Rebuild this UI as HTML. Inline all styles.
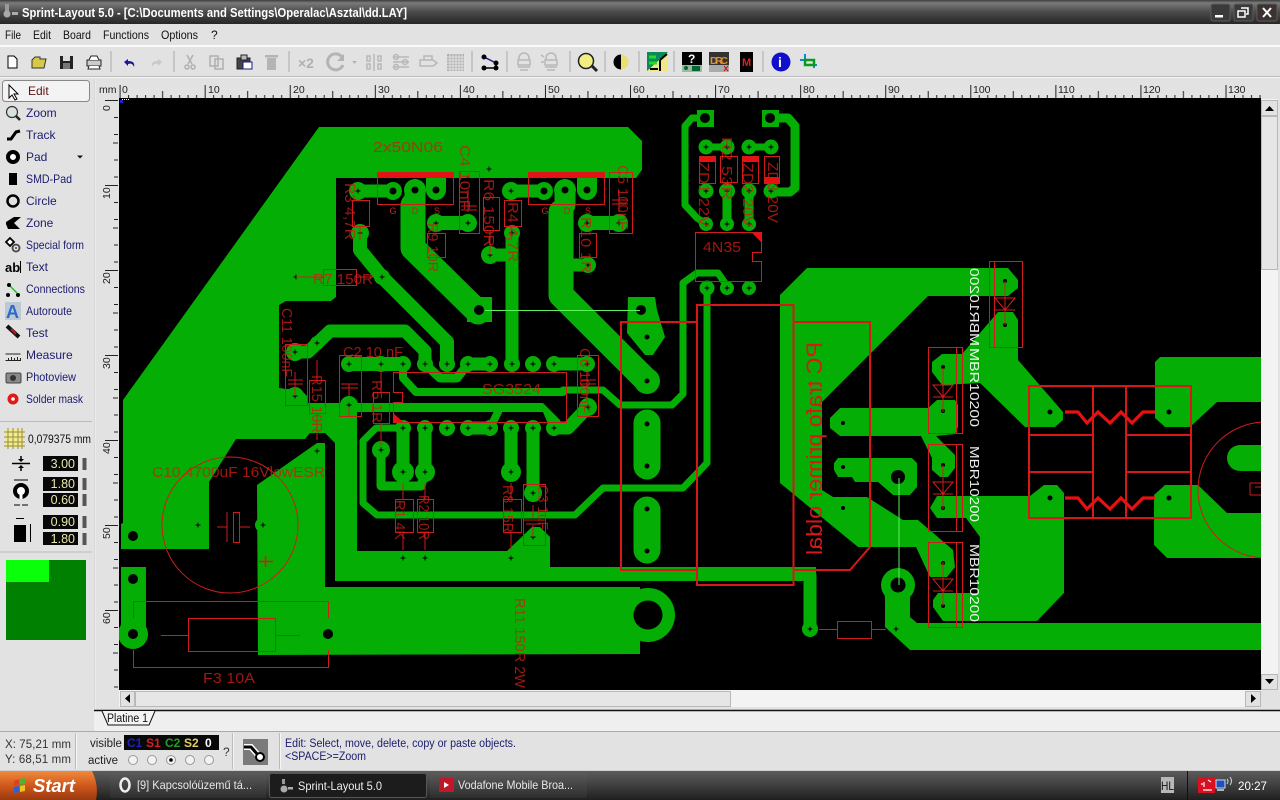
<!DOCTYPE html>
<html><head><meta charset="utf-8"><title>Sprint-Layout 5.0</title>
<style>
html,body{margin:0;padding:0;background:#e2e2e2;width:1280px;height:800px;overflow:hidden}
svg{display:block}
text{font-family:"Liberation Sans","DejaVu Sans",sans-serif}
.nav{fill:#1c1c6e;font-size:12px}
.m{fill:#111;font-size:12px}
.r{fill:#cc1e14;font-size:15px;fill-opacity:.78}
.w{fill:#fff;font-size:13px;fill-opacity:.92}
.rl{fill:#222;font-size:10.5px}
.f{fill:#e8e8a8;font-size:12.5px;text-anchor:end}
</style></head><body>
<svg width="1280" height="800" viewBox="0 0 1280 800" xmlns="http://www.w3.org/2000/svg">
<defs>
<linearGradient id="tb" x1="0" y1="0" x2="0" y2="1"><stop offset="0" stop-color="#3c3c3c"/><stop offset=".12" stop-color="#7a7a7a"/><stop offset=".5" stop-color="#4a4a4a"/><stop offset="1" stop-color="#262626"/></linearGradient>
<linearGradient id="tk" x1="0" y1="0" x2="0" y2="1"><stop offset="0" stop-color="#5e5e5e"/><stop offset=".5" stop-color="#404040"/><stop offset="1" stop-color="#1f1f1f"/></linearGradient>
<linearGradient id="st" x1="0" y1="0" x2="0" y2="1"><stop offset="0" stop-color="#f08a3c"/><stop offset=".5" stop-color="#d0581c"/><stop offset="1" stop-color="#9a3a10"/></linearGradient>
<linearGradient id="btn" x1="0" y1="0" x2="0" y2="1"><stop offset="0" stop-color="#5a5a5a"/><stop offset="1" stop-color="#2e2e2e"/></linearGradient>
<clipPath id="cv"><rect x="119" y="99" width="1142" height="591"/></clipPath>
<pattern id="hr" x="119.6" y="85" width="85.07" height="13" patternUnits="userSpaceOnUse">
<path d="M.5 0V13M43 6V13M9 10V13M17.5 10V13M26 10V13M34.5 10V13M51.5 10V13M60 10V13M68.5 10V13M77 10V13" stroke="#222" fill="none"/></pattern>
<pattern id="vr" x="105" y="100" width="13" height="85" patternUnits="userSpaceOnUse">
<path d="M0 .5H13M8 43H13M9 17.5H13M9 34.5H13M9 60H13M9 77H13" stroke="#222" fill="none"/></pattern>
<g id="t"><path d="M-2.5 0H2.5M0 -2.5V2.5" stroke="#000" stroke-width=".9" fill="none"/><circle r="1" fill="#000"/></g>
<g id="dio"><path d="M-10 0H10L0 12ZM-10 12H10M0 -17V27" stroke="#d81c1c" fill="none"/></g>
</defs>

<rect width="1280" height="800" fill="#e2e2e2"/>

<!-- title bar -->
<rect width="1280" height="24" fill="url(#tb)"/>
<rect x="5" y="4" width="4" height="8" fill="#999"/><circle cx="7" cy="14" r="3.5" fill="#aaa"/><rect x="12" y="12" width="6" height="3" fill="#aaa"/>
<text x="22" y="17" fill="#fff" font-size="12.5" font-weight="bold" textLength="385" lengthAdjust="spacingAndGlyphs">Sprint-Layout 5.0 - [C:\Documents and Settings\Operalac\Asztal\dd.LAY]</text>
<rect x="1211" y="4" width="19" height="17" rx="2" fill="#3a3a3a" stroke="#5c5c5c"/><rect x="1215" y="15" width="8" height="2.5" fill="#fff"/>
<rect x="1234" y="4" width="19" height="17" rx="2" fill="#3a3a3a" stroke="#5c5c5c"/><path d="M1241 8h7v6h-2M1238 11h7v6h-7z" fill="none" stroke="#fff" stroke-width="1.5"/>
<rect x="1257" y="4" width="20" height="17" rx="2" fill="#3c3230" stroke="#5c5c5c"/><path d="M1263 8l8 9M1271 8l-8 9" stroke="#fff" stroke-width="2"/>

<!-- menu -->
<rect y="24" width="1280" height="22" fill="#e2e2e2"/>
<rect y="45" width="1280" height="2" fill="#fafafa"/>
<text class="m" x="5" y="39" textLength="16" lengthAdjust="spacingAndGlyphs">File</text>
<text class="m" x="33" y="39" textLength="18" lengthAdjust="spacingAndGlyphs">Edit</text>
<text class="m" x="63" y="39" textLength="28" lengthAdjust="spacingAndGlyphs">Board</text>
<text class="m" x="103" y="39" textLength="46" lengthAdjust="spacingAndGlyphs">Functions</text>
<text class="m" x="161" y="39" textLength="37" lengthAdjust="spacingAndGlyphs">Options</text>
<text class="m" x="211" y="39">?</text>

<!-- toolbar -->
<rect y="76" width="1280" height="1" fill="#bbb"/><rect y="77" width="1280" height="1" fill="#f6f6f6"/>
<path d="M111 51V72M174 51V72M289 51V72M472 51V72M507 51V72M570 51V72M605 51V72M639 51V72M674 51V72M763 51V72" stroke="#bdbdbd" stroke-width="1.5"/>
<path d="M8 56h6l3 3v9H8z" fill="#fff" stroke="#000"/>
<path d="M32 60l3-3h5v2h6l-2 9H32z" fill="#d8c848" stroke="#333"/>
<rect x="60" y="56" width="13" height="13" fill="#222"/><rect x="63" y="56" width="7" height="5" fill="#ddd"/><rect x="63" y="63" width="7" height="6" fill="#777"/>
<rect x="87" y="60" width="14" height="6" fill="#ccc" stroke="#222"/><path d="M89 60l2-4h6l2 4M89 66l-1 3h12l-1-3" fill="#fff" stroke="#222"/>
<path d="M124 62l4-3v2c5 0 7 2 6 6-1-3-3-4-6-3v2z" fill="#1a1a8a"/>
<path d="M162 62l-4-3v2c-5 0-7 2-6 6 1-3 3-4 6-3v2z" fill="#c8c8c8"/>
<g fill="none" stroke="#b0b0b0" stroke-width="1.5"><path d="M187 55l5 9M193 55l-5 9"/><circle cx="187" cy="67" r="2"/><circle cx="193" cy="67" r="2"/>
<rect x="210" y="56" width="8" height="10"/><rect x="215" y="59" width="8" height="10"/></g>
<rect x="237" y="58" width="13" height="11" fill="#444" stroke="#222"/><rect x="241" y="55" width="6" height="5" fill="#bbb" stroke="#222"/><rect x="243" y="62" width="9" height="7" fill="#fff" stroke="#1a1a8a"/>
<rect x="267" y="58" width="9" height="12" fill="#b4b4b4"/><rect x="265" y="55" width="13" height="2.5" fill="#b4b4b4"/>
<text x="298" y="68" fill="#b0b0b0" font-size="14" font-weight="bold">×2</text>
<path d="M342 57a8 8 0 1 0 1 8" fill="none" stroke="#b4b4b4" stroke-width="3"/><path d="M344 54v7h-7z" fill="#b4b4b4"/><path d="M352 61h5l-2.500 3z" fill="#b4b4b4"/>
<g fill="none" stroke="#b8b8b8" stroke-width="1.5"><path d="M374 54V71M367 56h3v5h-3zM378 56h3v5h-3zM367 64h3v5h-3zM378 64h3v5h-3z"/>
<path d="M393 57h16M393 62h16M393 67h16"/><circle cx="396" cy="57" r="2.500"/><circle cx="405" cy="62" r="2.500"/><circle cx="396" cy="67" r="2.500"/>
<path d="M420 60h13l4 3-4 3h-13zM424 56h8v4h-8z"/></g>
<rect x="447" y="54" width="17" height="17" fill="#b0b0b0"/><path d="M450 54v17M453 54v17M456 54v17M459 54v17M462 54v17M447 57h17M447 60h17M447 63h17M447 66h17M447 69h17" stroke="#e2e2e2"/>
<path d="M484 57l12 6" stroke="#1a1a8a" fill="none" stroke-width="1.500"/><path d="M484 68h12v-5" stroke="#000" fill="none" stroke-width="1.500"/>
<circle cx="484" cy="57" r="2.500" fill="#000"/><circle cx="496" cy="63" r="2.500" fill="#000"/><circle cx="484" cy="68" r="2.500" fill="#000"/><circle cx="496" cy="68" r="2.500" fill="#000"/>
<g fill="none" stroke="#b8b8b8" stroke-width="1.500"><path d="M519 60v-2a5 5 0 0 1 10 0v2M518 60h12v5h-12zM518 67h12M520 70h8"/>
<path d="M546 60v-2a5 5 0 0 1 10 0v2M545 60h12v5h-12zM545 67h12M547 70h8M541 55l3 2M541 62h3"/></g>
<circle cx="586" cy="61" r="7.500" fill="#f2ee80" stroke="#222" stroke-width="1.500"/><path d="M592 66l5 5" stroke="#222" stroke-width="3"/>
<circle cx="621" cy="62" r="7.500" fill="#e8e070"/><path d="M621 54.500a7.500 7.500 0 0 0 0 15zM621 60a2 2 0 0 0 0 4z" fill="#000"/>
<rect x="647" y="52" width="21" height="19" fill="#f0e888"/><path d="M647 52h21L647 71z" fill="#0a8a5a"/><path d="M649 57h7M649 63h8" stroke="#22dd22" stroke-width="3"/><path d="M660 60v11M660 60l7-6M650 69h8" stroke="#000" stroke-width="2"/>
<rect x="682" y="52" width="20" height="20" fill="#000"/><rect x="682" y="65" width="20" height="7" fill="#9aba9a"/><text x="688" y="63" fill="#fff" font-size="12" font-weight="bold">?</text><circle cx="686" cy="68" r="2" fill="#063"/><rect x="692" y="66" width="8" height="5" fill="#063"/>
<rect x="709" y="52" width="20" height="20" fill="#333"/><text x="710" y="64" fill="#e09030" font-size="10.500" font-weight="bold" textLength="18">DRC</text><rect x="709" y="65" width="20" height="7" fill="#aaa"/><path d="M724 66l4 5M728 66l-4 5" stroke="#c00"/>
<rect x="740" y="52" width="13" height="20" fill="#000"/><text x="742" y="66" fill="#e02020" font-size="11" font-weight="bold">M</text>
<circle cx="781" cy="62" r="9.500" fill="#1010cc"/><text x="778" y="67" fill="#fff" font-size="14" font-weight="bold">i</text>
<path d="M800 60h14v8M805 54v11h12" fill="none" stroke="#0a8ad0" stroke-width="2"/><path d="M805 60h9v5h-9z" fill="none" stroke="#0a9a20" stroke-width="2.500"/>

<!-- ruler -->
<rect x="94" y="78" width="1186" height="21" fill="#e2e2e2"/>
<rect x="95" y="78" width="24" height="612" fill="#e2e2e2"/>
<path d="M94 78V708" stroke="#bbb"/><path d="M95 78V708" stroke="#f4f4f4"/>
<rect x="119" y="85" width="1142" height="13" fill="url(#hr)"/>
<rect x="105" y="100" width="13" height="590" fill="url(#vr)"/>
<text x="99" y="93" class="rl" font-size="11">mm</text>
<text class="rl" x="122" y="93">0</text><text class="rl" x="208" y="93">10</text><text class="rl" x="293" y="93">20</text><text class="rl" x="378" y="93">30</text><text class="rl" x="463" y="93">40</text><text class="rl" x="548" y="93">50</text><text class="rl" x="633" y="93">60</text><text class="rl" x="718" y="93">70</text><text class="rl" x="803" y="93">80</text><text class="rl" x="888" y="93">90</text><text class="rl" x="973" y="93">100</text><text class="rl" x="1058" y="93">110</text><text class="rl" x="1143" y="93">120</text><text class="rl" x="1228" y="93">130</text>
<text class="rl" transform="translate(110,111) rotate(-90)">0</text>
<text class="rl" transform="translate(110,199) rotate(-90)">10</text>
<text class="rl" transform="translate(110,284) rotate(-90)">20</text>
<text class="rl" transform="translate(110,369) rotate(-90)">30</text>
<text class="rl" transform="translate(110,454) rotate(-90)">40</text>
<text class="rl" transform="translate(110,539) rotate(-90)">50</text>
<text class="rl" transform="translate(110,624) rotate(-90)">60</text>

<!-- PCB canvas -->
<rect x="119" y="98" width="1142" height="592" fill="#000"/>
<g clip-path="url(#cv)">
<g fill="#04ae04">
<polygon points="319,127 628,127 642,141 642,170 636,178 336,178 336,297 331,301 286,301 279,305 279,388 286,389 300,389 308,397 308,403 543,403 560,420 562,428 548,424 543,412 357,412 357,551 507,551 532,527 540,527 550,537 550,567 816,567 816,581 335,581 335,443 325,433 310,433 305,439 236,439 209,482 209,549 121,549 121,524 123,523 123,400"/>
<polygon points="257,485 317,443 325,443 325,587 640,587 640,654 258,655"/>
<circle cx="648" cy="615" r="27"/>
<circle cx="262" cy="525" r="7"/>
<polygon points="121,567 146,567 146,634 121,634"/><circle cx="133" cy="634" r="15"/>
<polygon points="628,297 655,297 657,310 665,337 653,355 645,355 627,333"/>
<polygon points="807,268 1008,268 1018,280 1018,288 1008,296 928,296 822,402 822,490 833,497 867,497 903,520 918,520 953,550 955,567 947,577 930,577 916,547 858,547 780,483 780,295"/>
<polygon points="840,408 928,408 937,400 955,400 958,405 958,427 955,434 936,436 955,455 955,468 948,477 940,477 932,470 932,458 921,436 840,436 830,428 830,418"/>
<polygon points="838,458 912,458 917,463 917,487 910,495 893,495 878,482 855,482 852,477 838,477 834,470 834,463"/>
<polygon points="937,496 1030,496 1044,485 1057,485 1064,493 1064,593 1037,621 943,621 933,607 933,600 938,593 977,593 980,537 966,518 937,518 930,508"/>
<polygon points="998,312 1013,312 1018,320 1018,360 1063,412 1063,420 1055,427 1025,427 980,383 942,385 932,372 932,362 942,354 962,354"/>
<polygon points="1160,357 1261,357 1261,402 1217,402 1190,427 1165,427 1155,418 1155,362"/>
<polygon points="1165,485 1198,485 1227,513 1261,513 1261,558 1167,558 1154,545 1154,495"/>
<polygon points="885,590 910,590 910,617 917,623 1261,623 1261,650 910,650 885,627"/>
<circle cx="898" cy="585" r="17"/>
<rect x="467" y="297" width="25" height="25"/>
<rect x="697" y="110" width="17" height="17"/><rect x="762" y="110" width="17" height="17"/>
</g>
<g fill="none" stroke="#04ae04" stroke-linecap="round" stroke-linejoin="round">
<path stroke-width="13" d="M358 191H393M511 191H544M490 255H512M575 265H588M512 233V364M295 352H308L330 331H405L425 351V364M468 364H490M554 364H587M403 428V472M425 428V472M468 428H490M511 428V472M533 428V493M553 428H568L588 407M810 575V629"/>
<path stroke-width="14" d="M438 223H468M587 223H619M360 233V250L382 277L447 342V364M349 364H403"/>
<path stroke-width="9" d="M425 364L440 378H457L468 364M381 450V486H421L425 472M770 118H788L795 126V188L790 192H771M727 191V224M749 191V224"/>
<path stroke-width="8" d="M403 364V378L416 392H563M490 428L498 412"/>
<path stroke-width="7" d="M563 390H603L620 405H672L683 394V283L697 273H718L727 286M400 428H376L363 441V503L377 515H575L603 488H683L707 463V288M700 118H692L685 126V205L697 218L706 224M706 147H727M749 147H771"/>
<path stroke-width="25" d="M413 205V248L478 312M561 212V295L647 381"/>
<path stroke-width="21" d="M415 190V205M565 190V205"/>
<path stroke-width="20" d="M436 178V190M587 178V190"/>
<path stroke-width="27" d="M647 423V466M647 510V550"/>
<path stroke-width="26" d="M1240 458H1270"/>
</g>
<g fill="#04ae04">
<circle cx="358" cy="191" r="9"/><circle cx="393" cy="191" r="9"/><circle cx="511" cy="191" r="9"/><circle cx="544" cy="191" r="9"/><circle cx="436" cy="223" r="9"/><circle cx="468" cy="223" r="9"/><circle cx="587" cy="223" r="9"/><circle cx="619" cy="223" r="9"/><circle cx="490" cy="255" r="9"/><circle cx="588" cy="265" r="8"/><circle cx="512" cy="233" r="8"/><circle cx="360" cy="233" r="9"/><circle cx="382" cy="277" r="8"/><circle cx="295" cy="352" r="9"/><circle cx="317" cy="343" r="7"/>
<circle cx="349" cy="364" r="8"/><circle cx="381" cy="364" r="8"/><circle cx="403" cy="364" r="8"/><circle cx="425" cy="364" r="8"/><circle cx="447" cy="364" r="8"/><circle cx="468" cy="364" r="8"/><circle cx="490" cy="364" r="8"/><circle cx="512" cy="364" r="8"/><circle cx="533" cy="364" r="8"/><circle cx="554" cy="364" r="8"/><circle cx="587" cy="364" r="8"/>
<circle cx="403" cy="428" r="8"/><circle cx="425" cy="428" r="8"/><circle cx="447" cy="428" r="8"/><circle cx="468" cy="428" r="8"/><circle cx="490" cy="428" r="8"/><circle cx="511" cy="428" r="8"/><circle cx="533" cy="428" r="8"/><circle cx="554" cy="428" r="8"/><circle cx="588" cy="407" r="9"/>
<circle cx="403" cy="472" r="11"/><circle cx="425" cy="472" r="10"/><circle cx="511" cy="472" r="10"/><circle cx="381" cy="450" r="9"/><circle cx="533" cy="493" r="9"/><circle cx="295" cy="396" r="9"/><circle cx="349" cy="405" r="9"/>
<circle cx="706" cy="147" r="7.500"/><circle cx="727" cy="147" r="7.500"/><circle cx="749" cy="147" r="7.500"/><circle cx="771" cy="147" r="7.500"/><circle cx="706" cy="191" r="7.500"/><circle cx="727" cy="191" r="8"/><circle cx="749" cy="191" r="7.500"/><circle cx="771" cy="191" r="7.500"/><circle cx="706" cy="224" r="7"/><circle cx="727" cy="224" r="7"/><circle cx="749" cy="224" r="7"/>
<circle cx="707" cy="288" r="7.500"/><circle cx="727" cy="288" r="7"/><circle cx="749" cy="288" r="7"/><circle cx="647" cy="381" r="13"/><circle cx="415" cy="190" r="11"/><circle cx="565" cy="190" r="11"/>
<circle cx="533" cy="537" r="6"/><circle cx="810" cy="629" r="8"/>
</g>
<!-- holes -->
<g fill="#000">
<circle cx="393" cy="191" r="3.500"/><circle cx="415" cy="190" r="3.500"/><circle cx="436" cy="190" r="3.500"/><circle cx="544" cy="191" r="3.500"/><circle cx="565" cy="190" r="3.500"/><circle cx="587" cy="190" r="3.500"/>
<circle cx="479" cy="310" r="5"/><circle cx="641" cy="310" r="5"/><circle cx="648" cy="615" r="14.500"/><circle cx="705" cy="118" r="5"/><circle cx="770" cy="118" r="5"/><circle cx="133" cy="536" r="5"/><circle cx="133" cy="579" r="5"/><circle cx="133" cy="634" r="5"/><circle cx="328" cy="634" r="5"/><circle cx="898" cy="477" r="7"/><circle cx="898" cy="585" r="7.500"/>
<circle cx="647" cy="381" r="2.500"/><circle cx="647" cy="337" r="2.500"/><circle cx="647" cy="424" r="2.500"/><circle cx="647" cy="466" r="2.500"/><circle cx="647" cy="509" r="2.500"/><circle cx="647" cy="551" r="2.500"/>
<circle cx="1050" cy="412" r="2.500"/><circle cx="1169" cy="412" r="2.500"/><circle cx="1050" cy="498" r="2.500"/><circle cx="1169" cy="498" r="2.500"/>
<circle cx="1005" cy="281" r="2"/><circle cx="1005" cy="325" r="2"/><circle cx="943" cy="367" r="2"/><circle cx="943" cy="411" r="2"/><circle cx="943" cy="465" r="2"/><circle cx="943" cy="508" r="2"/><circle cx="943" cy="563" r="2"/><circle cx="943" cy="606" r="2"/><circle cx="843" cy="423" r="2"/><circle cx="843" cy="467" r="2"/><circle cx="843" cy="508" r="2"/>
</g>
<g>
<use href="#t" x="358" y="191"/><use href="#t" x="511" y="191"/><use href="#t" x="436" y="223"/><use href="#t" x="468" y="223"/><use href="#t" x="587" y="223"/><use href="#t" x="619" y="223"/><use href="#t" x="490" y="255"/><use href="#t" x="588" y="265"/><use href="#t" x="512" y="233"/><use href="#t" x="360" y="233"/><use href="#t" x="382" y="277"/><use href="#t" x="295" y="352"/><use href="#t" x="317" y="343"/><use href="#t" x="349" y="364"/><use href="#t" x="381" y="364"/><use href="#t" x="403" y="364"/><use href="#t" x="425" y="364"/><use href="#t" x="447" y="364"/><use href="#t" x="468" y="364"/><use href="#t" x="490" y="364"/><use href="#t" x="512" y="364"/><use href="#t" x="533" y="364"/><use href="#t" x="554" y="364"/><use href="#t" x="587" y="364"/>
<use href="#t" x="403" y="428"/><use href="#t" x="425" y="428"/><use href="#t" x="447" y="428"/><use href="#t" x="468" y="428"/><use href="#t" x="490" y="428"/><use href="#t" x="511" y="428"/><use href="#t" x="533" y="428"/><use href="#t" x="554" y="428"/><use href="#t" x="588" y="407"/><use href="#t" x="403" y="472"/><use href="#t" x="425" y="472"/><use href="#t" x="511" y="472"/><use href="#t" x="381" y="450"/><use href="#t" x="533" y="493"/><use href="#t" x="295" y="396"/><use href="#t" x="349" y="405"/>
<use href="#t" x="706" y="147"/><use href="#t" x="727" y="147"/><use href="#t" x="749" y="147"/><use href="#t" x="771" y="147"/><use href="#t" x="706" y="191"/><use href="#t" x="727" y="191"/><use href="#t" x="749" y="191"/><use href="#t" x="771" y="191"/><use href="#t" x="706" y="224"/><use href="#t" x="727" y="224"/><use href="#t" x="749" y="224"/><use href="#t" x="707" y="288"/><use href="#t" x="727" y="288"/><use href="#t" x="749" y="288"/>
<use href="#t" x="468" y="179"/><use href="#t" x="489" y="169"/><use href="#t" x="619" y="179"/><use href="#t" x="296" y="277"/><use href="#t" x="198" y="525"/><use href="#t" x="263" y="525"/><use href="#t" x="317" y="451"/><use href="#t" x="403" y="558"/><use href="#t" x="425" y="558"/><use href="#t" x="511" y="558"/><use href="#t" x="533" y="537"/><use href="#t" x="810" y="629"/><use href="#t" x="896" y="629"/>
</g>
<!-- air wires -->
<path d="M485 310.500H640M899 478V585" stroke="#60f060" fill="none"/>
<rect x="120" y="100" width="3" height="3" fill="#2222cc"/><path d="M122 99.500H130" stroke="#fff" stroke-dasharray="1 1"/>

<!-- silkscreen -->
<g fill="#e81010">
<rect x="377" y="172" width="76" height="6"/><rect x="528" y="172" width="76" height="6"/>
<polygon points="393,413 403,422 393,422"/><polygon points="751,232 761,232 761,242"/>
<rect x="699" y="156" width="16" height="6"/><rect x="742" y="156" width="16" height="6"/><rect x="764" y="177" width="15" height="6"/>
</g>
<g fill="none" stroke="#d01c1c" stroke-width="1">
<rect x="377.500" y="172.500" width="76" height="32"/><rect x="528.500" y="172.500" width="76" height="32"/>
<rect x="459.500" y="171.500" width="20" height="62"/><rect x="609.500" y="172.500" width="23" height="61"/>
<rect x="483.500" y="197.500" width="16" height="33"/><rect x="504.500" y="200.500" width="17" height="26"/><rect x="427.500" y="233.500" width="18" height="24"/><rect x="579.500" y="233.500" width="17" height="24"/><rect x="352.500" y="200.500" width="17" height="26"/><rect x="323.500" y="269.500" width="33" height="16"/>
<rect x="285.500" y="344.500" width="22" height="61"/><rect x="339.500" y="355.500" width="22" height="61"/><rect x="309.500" y="380.500" width="16" height="33"/><rect x="373.500" y="392.500" width="16" height="31"/><rect x="577.500" y="355.500" width="21" height="61"/>
<path d="M393.500 372.500H566.500V422.500H393.500V402.500H402.500V392.500H393.500Z"/>
<rect x="395.500" y="499.500" width="18" height="33"/><rect x="417.500" y="499.500" width="16" height="33"/><rect x="503.500" y="499.500" width="18" height="33"/><rect x="523.500" y="484.500" width="22" height="61"/>
<path d="M133.500 618V601.500H328.500V618M133.500 650V667.500H328.500V650"/><rect x="188.500" y="618.500" width="87" height="33"/><path d="M161 635.500H188M275 635.500H300"/>
<circle cx="230" cy="525" r="68"/><path d="M217 527H227M227 512V542M239 527H250"/><rect x="233.500" y="512.500" width="6" height="30"/>
<path d="M695.500 232.500H761.500V252.500H752.500V261.500H761.500V281.500H695.500Z"/>
<rect x="699.500" y="156.500" width="16" height="27"/><rect x="720.500" y="156.500" width="17" height="26"/><rect x="742.500" y="156.500" width="16" height="27"/><rect x="764.500" y="156.500" width="15" height="27"/>
<rect x="837.500" y="621.500" width="34" height="17"/><path d="M819 629.500H837M871 629.500H886"/>
<rect x="989.500" y="261.500" width="33" height="86"/><path d="M994.500 261V347"/>
<rect x="928.500" y="347.500" width="34" height="86"/><path d="M956.500 347V433"/>
<rect x="928.500" y="444.500" width="34" height="87"/><path d="M956.500 444V531"/>
<rect x="928.500" y="542.500" width="34" height="85"/><path d="M956.500 542V627"/>
<circle cx="1266" cy="490" r="68"/>
<path d="M1250 483H1261M1250 483V495M1261 495H1250M1255 487H1261"/>
<path d="M296 277H325M356 277H373M360 240V226M511 240V226M403 483V499M425 483V499M511 483V499M403 532V550M425 532V550M511 532V550M533 505V518M533 525V537M523 520H544M526 524H541M317 360V380M317 413V440M349 416V407M381 370V392M381 423V445M349 384V396M341 384H358M341 388H358M295 372V396M288 380H303M288 384H303M490 230V255M468 190V212M461 206H477M461 210H477M587 370V400M580 380H596M580 384H596M619 190V212M612 200H628M612 204H628"/>
</g>
<g transform="translate(1005,298)"><use href="#dio"/></g>
<g transform="translate(943,385)"><use href="#dio"/></g>
<g transform="translate(943,482)"><use href="#dio"/></g>
<g transform="translate(943,579)"><use href="#dio"/></g>
<g fill="none" stroke="#d81818" stroke-width="2">
<rect x="621" y="322" width="76" height="248"/><rect x="697" y="305" width="96.500" height="280"/>
<path d="M794 322H870V547L850 570H794"/>
<rect x="1029" y="386" width="162" height="132"/>
<path d="M1093 386V518M1126 386V518M1029 435H1093M1126 435H1191M1029 472H1093M1126 472H1191"/>
</g>
<path d="M1065 412H1078L1087 423L1098 412L1110 423L1121 412L1132 423L1143 412H1155M1065 498H1078L1087 509L1098 498L1110 509L1121 498L1132 509L1143 498H1155" fill="none" stroke="#e81010" stroke-width="3.200"/>
<path d="M259 561.500H273M265.500 556V567" stroke="#e81010" stroke-width="1.500"/>

<!-- labels -->
<g>
<text x="373" y="152" class="r" textLength="70" lengthAdjust="spacingAndGlyphs">2x50N06</text>
<text class="r" x="313" y="284" textLength="60" lengthAdjust="spacingAndGlyphs">R7 150R</text>
<text class="r" x="343" y="357" textLength="60" lengthAdjust="spacingAndGlyphs">C2 10 nF</text>
<text class="r" x="482" y="394" textLength="59" lengthAdjust="spacingAndGlyphs">SG3524</text>
<text class="r" x="152" y="477" textLength="173" lengthAdjust="spacingAndGlyphs">C10 4700uF 16VlowESR</text>
<text class="r" x="203" y="683" textLength="52" lengthAdjust="spacingAndGlyphs">F3 10A</text>
<text class="r" x="703" y="252" textLength="38" lengthAdjust="spacingAndGlyphs">4N35</text>
<text class="r" transform="translate(460,145) rotate(90)" textLength="65" lengthAdjust="spacingAndGlyphs">C4 10nF</text>
<text class="r" transform="translate(484,179) rotate(90)" textLength="68" lengthAdjust="spacingAndGlyphs">R6 150R</text>
<text class="r" transform="translate(508,202) rotate(90)" textLength="60" lengthAdjust="spacingAndGlyphs">R4 4,7R</text>
<text class="r" transform="translate(428,223) rotate(90)" textLength="49" lengthAdjust="spacingAndGlyphs">R9 10R</text>
<text class="r" transform="translate(581,217) rotate(90)" textLength="56" lengthAdjust="spacingAndGlyphs">R10 1R</text>
<text class="r" transform="translate(618,165) rotate(90)" textLength="65" lengthAdjust="spacingAndGlyphs">C5 100nF</text>
<text class="r" transform="translate(345,183) rotate(90)" textLength="57" lengthAdjust="spacingAndGlyphs">R3 4,7R</text>
<text class="r" transform="translate(282,308) rotate(90)" textLength="69" lengthAdjust="spacingAndGlyphs">C11 100nF</text>
<text class="r" transform="translate(312,375) rotate(90)" textLength="58" lengthAdjust="spacingAndGlyphs">R15 10R</text>
<text class="r" transform="translate(372,380) rotate(90)" textLength="43" lengthAdjust="spacingAndGlyphs">R5 1R</text>
<text class="r" transform="translate(580,348) rotate(90)" textLength="65" lengthAdjust="spacingAndGlyphs">C6 100nF</text>
<text class="r" transform="translate(395,500) rotate(90)" textLength="40" lengthAdjust="spacingAndGlyphs">R1 4K</text>
<text class="r" transform="translate(419,495) rotate(90)" textLength="45" lengthAdjust="spacingAndGlyphs">R2 10R</text>
<text class="r" transform="translate(503,485) rotate(90)" textLength="48" lengthAdjust="spacingAndGlyphs">R8 15R</text>
<text class="r" transform="translate(538,485) rotate(90)" textLength="45" lengthAdjust="spacingAndGlyphs">C3 1uF</text>
<text class="r" transform="translate(515,598) rotate(90)" textLength="90" lengthAdjust="spacingAndGlyphs">R11 150R 2W</text>
<text class="r" transform="translate(722,137) rotate(90)" textLength="63" lengthAdjust="spacingAndGlyphs">R2 53R</text>
<text class="r" transform="translate(699,162) rotate(90)" textLength="65" lengthAdjust="spacingAndGlyphs">ZD1 22V</text>
<text class="r" transform="translate(743,163) rotate(90)" textLength="64" lengthAdjust="spacingAndGlyphs">ZD2 20V</text>
<text class="r" transform="translate(768,162) rotate(90)" textLength="61" lengthAdjust="spacingAndGlyphs">ZD3 20V</text>
<text x="393" y="214" fill="#d01c1c" font-size="9" text-anchor="middle">G</text><text x="415" y="214" fill="#d01c1c" font-size="9" text-anchor="middle">D</text><text x="437" y="214" fill="#d01c1c" font-size="9" text-anchor="middle">S</text>
<text x="545" y="214" fill="#d01c1c" font-size="9" text-anchor="middle">G</text><text x="567" y="214" fill="#d01c1c" font-size="9" text-anchor="middle">D</text><text x="588" y="214" fill="#d01c1c" font-size="9" text-anchor="middle">S</text>
<text transform="translate(822,342) rotate(90) scale(1,-1)" fill="#d81818" font-size="22" textLength="213" lengthAdjust="spacingAndGlyphs">PC trafo primer oldal</text>
</g>
<text class="w" transform="matrix(0,-1,-1,0,970,346)" textLength="78" lengthAdjust="spacingAndGlyphs">MBR10200</text>
<text class="w" transform="translate(970,348) rotate(90)" textLength="79" lengthAdjust="spacingAndGlyphs">MBR10200</text>
<text class="w" transform="translate(970,446) rotate(90)" textLength="76" lengthAdjust="spacingAndGlyphs">MBR10200</text>
<text class="w" transform="translate(970,544) rotate(90)" textLength="78" lengthAdjust="spacingAndGlyphs">MBR10200</text>
</g>

<!-- scrollbars -->
<rect x="1261" y="99" width="19" height="611" fill="#e2e2e2"/>
<rect x="1261" y="99" width="17" height="591" fill="#f3f3f3"/>
<rect x="1261.500" y="100.500" width="16" height="15" fill="#e2e2e2" stroke="#b8b8b8"/><path d="M1265 111h9l-4.500-5z" fill="#000"/>
<rect x="1261.500" y="116.500" width="16" height="153" fill="#e6e6e6" stroke="#b8b8b8"/>
<rect x="1261.500" y="674.500" width="16" height="15" fill="#e2e2e2" stroke="#b8b8b8"/><path d="M1265 679h9l-4.500 5z" fill="#000"/>
<rect x="119" y="690" width="1161" height="20" fill="#e2e2e2"/>
<rect x="119" y="690" width="1142" height="17" fill="#f3f3f3"/>
<rect x="120.500" y="691.500" width="14" height="15" fill="#e2e2e2" stroke="#b8b8b8"/><path d="M130 694v9l-5-4.500z" fill="#000"/>
<rect x="135.500" y="691.500" width="595" height="15" fill="#e6e6e6" stroke="#b8b8b8"/>
<rect x="1245.500" y="691.500" width="15" height="15" fill="#e2e2e2" stroke="#b8b8b8"/><path d="M1251 694v9l5-4.500z" fill="#000"/>

<!-- tab row -->
<rect x="94" y="711" width="1186" height="20" fill="#efefef"/>
<path d="M94 710.500H1280" stroke="#111" stroke-width="1.500"/>
<path d="M102 711L108 725H149L155 711" fill="#f4f4f4" stroke="#111"/>
<text x="107" y="722" font-size="11.500" fill="#111" textLength="41" lengthAdjust="spacingAndGlyphs">Platine 1</text>
<rect x="0" y="731" width="1280" height="1" fill="#aaa"/>

<!-- sidebar -->
<rect x="0" y="78" width="94" height="653" fill="#e2e2e2"/>
<rect x="2.500" y="80.500" width="87" height="21" rx="3" fill="#f3f3f3" stroke="#888"/>
<path d="M9 85V98L12 95L15 100L17 99L14 94H18Z" fill="#fff" stroke="#000"/>
<text x="28" y="95" fill="#5a1212" font-size="12">Edit</text>
<circle cx="12" cy="112" r="5.500" fill="#d8e0e0" stroke="#333" stroke-width="1.200"/><path d="M16 116l4 4" stroke="#222" stroke-width="2.500"/>
<text class="nav" x="26" y="117">Zoom</text>
<path d="M7 139L11 139L16 132L20 131" fill="none" stroke="#000" stroke-width="3"/>
<text class="nav" x="26" y="139">Track</text>
<circle cx="13" cy="157" r="5" fill="#fff" stroke="#000" stroke-width="4"/>
<text class="nav" x="26" y="161">Pad</text><path d="M77 155.500h6l-3 3z" fill="#111"/>
<rect x="9" y="173" width="8" height="12" fill="#000"/>
<text class="nav" x="26" y="183" textLength="46" lengthAdjust="spacingAndGlyphs">SMD-Pad</text>
<circle cx="13" cy="201" r="5.500" fill="none" stroke="#000" stroke-width="2.500"/>
<text class="nav" x="26" y="205">Circle</text>
<polygon points="6,224 6,222 14,217 21,217 14,223 20,229 8,229" fill="#000"/>
<text class="nav" x="26" y="227">Zone</text>
<path d="M10 238l4 4-4 4-4-4z" fill="#fff" stroke="#000" stroke-width="1.800"/><circle cx="16" cy="248" r="3.500" fill="none" stroke="#444" stroke-width="1.800"/><circle cx="16" cy="248" r="1" fill="#444"/>
<text class="nav" x="26" y="249" textLength="58" lengthAdjust="spacingAndGlyphs">Special form</text>
<text x="5" y="272" fill="#000" font-size="13" font-weight="bold">ab</text><path d="M20.500 261V273" stroke="#000"/>
<text class="nav" x="26" y="271">Text</text>
<path d="M9 285l8 8" stroke="#20c020" stroke-width="1.500"/><circle cx="9" cy="285" r="2" fill="#000"/><circle cx="8" cy="295" r="2" fill="#000"/><circle cx="18" cy="295" r="2" fill="#000"/>
<text class="nav" x="26" y="293" textLength="59" lengthAdjust="spacingAndGlyphs">Connections</text>
<rect x="5" y="302" width="16" height="18" fill="#bcc8d4"/><text x="6" y="318" fill="#2a6ad0" font-size="18" font-weight="bold">A</text>
<text class="nav" x="26" y="315" textLength="46" lengthAdjust="spacingAndGlyphs">Autoroute</text>
<path d="M7 326L19 337" stroke="#111" stroke-width="4"/><path d="M11 329L16 334" stroke="#d01020" stroke-width="2"/>
<text class="nav" x="26" y="337">Test</text>
<path d="M5.500 354H20.500M5.500 360.500H20.500V358M8.500 360V358M11.500 360V357M14.500 360V358M17.500 360V357" stroke="#222" fill="none"/>
<text class="nav" x="26" y="359">Measure</text>
<rect x="6" y="373" width="15" height="10" rx="1.500" fill="#8a8a8a" stroke="#444"/><circle cx="13" cy="378" r="3" fill="#333"/>
<text class="nav" x="26" y="381" textLength="50" lengthAdjust="spacingAndGlyphs">Photoview</text>
<circle cx="13" cy="399" r="5.500" fill="#e01818"/><circle cx="13" cy="399" r="1.800" fill="#fff"/>
<text class="nav" x="26" y="403" textLength="57" lengthAdjust="spacingAndGlyphs">Solder mask</text>
<path d="M0 421.500H92" stroke="#bbb"/>
<rect x="5" y="429" width="19" height="19" fill="#f0ee88"/><path d="M8 428V449M13 428V449M18 428V449M22 428V449M4 432H25M4 437H25M4 442H25M4 446H25" stroke="#9a8a4a"/>
<text x="28" y="443" fill="#111" font-size="12" textLength="63" lengthAdjust="spacingAndGlyphs">0,079375 mm</text>
<path d="M12 463.500H30M21 456v5M21 466v5" stroke="#000" stroke-width="1.500"/><path d="M18 459h6l-3 3zM18 468h6l-3-3z" fill="#000"/>
<path d="M14 480H28M14 505H20M22 505H28" stroke="#000"/>
<circle cx="21" cy="491" r="6" fill="#fff" stroke="#000" stroke-width="4"/><rect x="19.500" y="490" width="3" height="9" fill="#fff"/>
<rect x="14" y="525" width="12" height="17" fill="#000"/><path d="M16 518.500H24M30.500 524V542" stroke="#000"/>
<rect x="43" y="456" width="35" height="15" fill="#080808"/><text class="f" x="75" y="468">3.00</text>
<rect x="43" y="477" width="35" height="14" fill="#080808"/><text class="f" x="75" y="488">1.80</text>
<rect x="43" y="493" width="35" height="14" fill="#080808"/><text class="f" x="75" y="504">0.60</text>
<rect x="43" y="515" width="35" height="14" fill="#080808"/><text class="f" x="75" y="526">0.90</text>
<rect x="43" y="532" width="35" height="13" fill="#080808"/><text class="f" x="75" y="543">1.80</text>
<path d="M84.500 458V470M84.500 478V490M84.500 494V506M84.500 516V528M84.500 533V545" stroke="#555" stroke-width="4"/>
<path d="M0 552H92" stroke="#bbb"/>
<rect x="6" y="560" width="80" height="80" fill="#008000"/><rect x="6" y="560" width="43" height="22" fill="#0aff0a"/>

<!-- status bar -->
<rect y="732" width="1280" height="38" fill="#e2e2e2"/>
<path d="M75.500 733V769M232.500 733V769M279.500 733V769" stroke="#bbb"/><path d="M76.500 733V769M233.500 733V769M280.500 733V769" stroke="#f6f6f6"/>
<text x="5" y="748" font-size="11.500" fill="#333" textLength="66" lengthAdjust="spacing">X:  75,21 mm</text>
<text x="5" y="763" font-size="11.500" fill="#333" textLength="66" lengthAdjust="spacing">Y:  68,51 mm</text>
<text x="90" y="747" font-size="11.500" fill="#222">visible</text>
<text x="88" y="764" font-size="11.500" fill="#222">active</text>
<rect x="124" y="735" width="95" height="15" fill="#080808"/>
<text y="747" font-size="12" font-weight="bold"><tspan x="127" fill="#2020c0">C1</tspan><tspan x="146" fill="#d82020">S1</tspan><tspan x="165" fill="#20a020">C2</tspan><tspan x="184" fill="#e0d060">S2</tspan><tspan x="205" fill="#fff">0</tspan></text>
<g fill="#f2f2f2" stroke="#999"><circle cx="133" cy="760" r="4.500"/><circle cx="152" cy="760" r="4.500"/><circle cx="171" cy="760" r="4.500"/><circle cx="190" cy="760" r="4.500"/><circle cx="209" cy="760" r="4.500"/></g>
<circle cx="171" cy="760" r="1.800" fill="#000"/>
<text x="223" y="756" font-size="12" fill="#333">?</text>
<rect x="243" y="739" width="25" height="26" fill="#7a7a7a"/>
<path d="M244 747H251L258 755" fill="none" stroke="#fff" stroke-width="6"/><path d="M244 747H251L258 755" fill="none" stroke="#000" stroke-width="3"/><circle cx="260" cy="757" r="4" fill="#fff" stroke="#000" stroke-width="2"/>
<text x="285" y="747" fill="#1c1c6e" font-size="11.500" textLength="231" lengthAdjust="spacingAndGlyphs">Edit: Select, move, delete, copy or paste objects.</text>
<text x="285" y="760" fill="#1c1c6e" font-size="11.500" textLength="81" lengthAdjust="spacingAndGlyphs">&lt;SPACE&gt;=Zoom</text>

<!-- taskbar -->
<rect y="770" width="1280" height="30" fill="url(#tk)"/>
<rect y="770" width="1280" height="1" fill="#cfcfcf"/>
<path d="M0 771H92Q99 785 96 800H0Z" fill="url(#st)"/>
<path d="M14 781l5-2v6l-5 1z" fill="#e04020"/><path d="M20 779l5-1v6l-5 1z" fill="#50b030"/><path d="M14 787l5-1v6l-5 1z" fill="#3060d0"/><path d="M20 786l5-1v6l-5 1z" fill="#f0c020"/>
<text x="33" y="792" fill="#fff" font-size="18" font-weight="bold" font-style="italic" textLength="42" lengthAdjust="spacingAndGlyphs">Start</text>
<rect x="110" y="773" width="156" height="25" rx="2" fill="url(#btn)"/>
<ellipse cx="125" cy="785" rx="4.500" ry="6.500" fill="none" stroke="#eee" stroke-width="2.500"/>
<text x="137" y="789" fill="#e8e8e8" font-size="12" textLength="115" lengthAdjust="spacingAndGlyphs">[9] Kapcsolóüzemű tá...</text>
<rect x="269.500" y="773.500" width="157" height="24" rx="2" fill="#1c1c1c" stroke="#555"/>
<rect x="282" y="779" width="3" height="5" fill="#999"/><circle cx="284" cy="789" r="3.500" fill="#aaa"/><rect x="288" y="787" width="5" height="2.500" fill="#aaa"/>
<text x="298" y="790" fill="#eee" font-size="12" textLength="84" lengthAdjust="spacingAndGlyphs">Sprint-Layout 5.0</text>
<rect x="430" y="773" width="157" height="25" rx="2" fill="url(#btn)"/>
<rect x="439" y="778" width="15" height="14" fill="#c01828"/><path d="M444 782l5 3-5 3z" fill="#fff"/>
<text x="458" y="789" fill="#e8e8e8" font-size="12" textLength="115" lengthAdjust="spacingAndGlyphs">Vodafone Mobile Broa...</text>
<rect x="1161" y="777" width="13" height="16" fill="#b8b8b8"/><text x="1161" y="790" fill="#111" font-size="12" textLength="13" lengthAdjust="spacingAndGlyphs">HL</text>
<path d="M1187.500 771V800" stroke="#111"/>
<rect x="1198" y="777" width="17" height="16" fill="#d81020"/><path d="M1201 784h2M1204 782v5M1208 780l3 2M1203 790h9" stroke="#fff" stroke-width="1.200"/>
<rect x="1216" y="780" width="9" height="8" fill="#2050c0" stroke="#cde"/><path d="M1217 790h7" stroke="#cde" stroke-width="1.500"/><path d="M1227 779q2 2 0 5M1230 777q3 4 0 8" stroke="#cde" fill="none"/>
<text x="1238" y="790" fill="#fff" font-size="12" textLength="29" lengthAdjust="spacingAndGlyphs">20:27</text>
</svg>
</body></html>
